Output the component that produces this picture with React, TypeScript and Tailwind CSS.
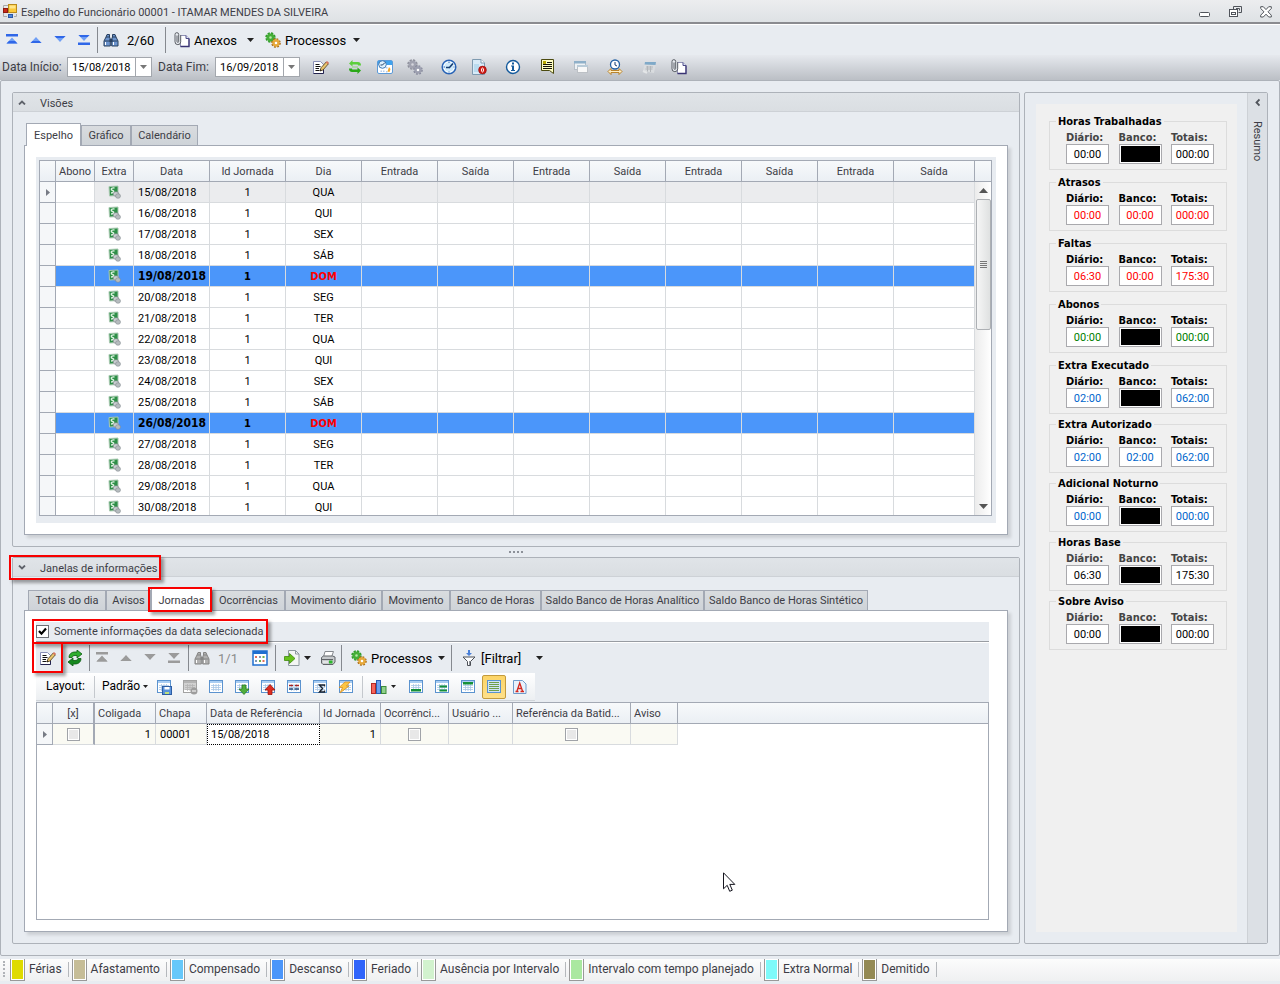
import { useState, type ReactNode } from "react";

const DAYS = [
  ["15/08/2018", "QUA"],
  ["16/08/2018", "QUI"],
  ["17/08/2018", "SEX"],
  ["18/08/2018", "SÁB"],
  ["19/08/2018", "DOM"],
  ["20/08/2018", "SEG"],
  ["21/08/2018", "TER"],
  ["22/08/2018", "QUA"],
  ["23/08/2018", "QUI"],
  ["24/08/2018", "SEX"],
  ["25/08/2018", "SÁB"],
  ["26/08/2018", "DOM"],
  ["27/08/2018", "SEG"],
  ["28/08/2018", "TER"],
  ["29/08/2018", "QUA"],
  ["30/08/2018", "QUI"],
];

const PUNCHES = ["Entrada", "Saída", "Entrada", "Saída", "Entrada", "Saída", "Entrada", "Saída"];

const INFO_TABS = [
  { label: "Totais do dia", w: "w-[78px]" },
  { label: "Avisos", w: "w-[45px]" },
  { label: "Jornadas", w: "w-[61px]" },
  { label: "Ocorrências", w: "w-[73px]" },
  { label: "Movimento diário", w: "w-[97px]" },
  { label: "Movimento", w: "w-[68px]" },
  { label: "Banco de Horas", w: "w-[91px]" },
  { label: "Saldo Banco de Horas Analítico", w: "w-[163px]" },
  { label: "Saldo Banco de Horas Sintético", w: "w-[164px]" },
];

type Total = { title: string; values: (string | null)[]; color: string; soft?: boolean };

const TOTALS_TOP: Total[] = [
  { title: "Horas Trabalhadas", values: ["00:00", null, "000:00"], color: "text-black", soft: true },
  { title: "Atrasos", values: ["00:00", "00:00", "000:00"], color: "text-[#ff0000]" },
  { title: "Faltas", values: ["06:30", "00:00", "175:30"], color: "text-[#ff0000]" },
  { title: "Abonos", values: ["00:00", null, "000:00"], color: "text-[#008000]" },
  { title: "Extra Executado", values: ["02:00", null, "062:00"], color: "text-[#0066cc]" },
];

const TOTALS_BOTTOM: Total[] = [
  { title: "Extra Autorizado", values: ["02:00", "02:00", "062:00"], color: "text-[#0066cc]" },
  { title: "Adicional Noturno", values: ["00:00", null, "000:00"], color: "text-[#0066cc]" },
  { title: "Horas Base", values: ["06:30", null, "175:30"], color: "text-black", soft: true },
  { title: "Sobre Aviso", values: ["00:00", null, "000:00"], color: "text-black", soft: true },
];

const LEGEND = [
  { label: "Férias", color: "bg-[#dfdb00]" },
  { label: "Afastamento", color: "bg-[#c6bd97]" },
  { label: "Compensado", color: "bg-[#66c8fa]" },
  { label: "Descanso", color: "bg-[#4b96fa]" },
  { label: "Feriado", color: "bg-[#3064fa]" },
  { label: "Ausência por Intervalo", color: "bg-[#d2f2ce]" },
  { label: "Intervalo com tempo planejado", color: "bg-[#aae8a0]" },
  { label: "Extra Normal", color: "bg-[#7dfafa]" },
  { label: "Demitido", color: "bg-[#948a54]" },
];

/* ---------- icons ---------- */

function Icon({ children }: { children: ReactNode }) {
  return (
    <svg width="16" height="16" viewBox="0 0 16 16" fill="none" className="shrink-0" aria-hidden="true">
      {children}
    </svg>
  );
}

const AppIcon = () => (
  <Icon>
    <rect x="6.500" y="1.500" width="8" height="8" fill="#fbc93a" stroke="#b98a1c" />
    <rect x="7.500" y="2.500" width="6" height="3" fill="#ffe68a" />
    <path d="M1.500 13.500V2.500H6" stroke="#aaa" />
    <rect x="1.500" y="5.500" width="4" height="4" fill="#c8291a" stroke="#8e1a10" />
    <rect x="6.500" y="11.500" width="4" height="3" fill="#4d86dc" stroke="#2c58a5" />
    <path d="M1.500 13.500H5M12 13.500h2.500V11" stroke="#aaa" />
  </Icon>
);

function NavIcon({ kind, gray }: { kind: "first" | "prev" | "next" | "last"; gray?: boolean }) {
  const c = gray ? "#9b9b9b" : "#2f67e8";
  const light = gray ? "#9b9b9b" : "#6f9ff5";
  return (
    <Icon>
      {kind === "first" && <><path d="M2 2h12v2.500H2z" fill={c} /><path d="M8 5.500l5.500 6h-11z" fill={light} /><path d="M5 9h6l2.500 2.500h-11z" fill={c} /></>}
      {kind === "prev" && <><path d="M8 5l5.500 6h-11z" fill={light} /><path d="M4.500 9h7l2 2h-11z" fill={c} /></>}
      {kind === "next" && <><path d="M8 10L2.500 4h11z" fill={light} /><path d="M4.500 6h7l2-2h-11z" fill={c} /></>}
      {kind === "last" && <><path d="M8 9L2.500 3h11z" fill={light} /><path d="M4.500 5h7l2-2h-11z" fill={c} /><path d="M2 10.500h12V13H2z" fill={c} /></>}
    </Icon>
  );
}

function BinocularsIcon({ gray }: { gray?: boolean }) {
  const d = gray ? "#858585" : "#29405f";
  const m = gray ? "#b0b0b0" : "#6b93cd";
  return (
    <Icon>
      <path d="M4 2.500h2.500v2.500l.8 2V14H1V9l2-4z" fill={m} stroke={d} />
      <path d="M12 2.500H9.500v2.500l-.8 2V14H15V9l-2-4z" fill={m} stroke={d} />
      <path d="M6.500 7h3v3h-3z" fill={d} />
      <path d="M2.500 10v3M10.500 10v3" stroke="#fff" />
      <path d="M3 5h3.500M9.500 5H13M1.500 9h5.500M9 9h5.500" stroke={d} />
    </Icon>
  );
}

const ClipIcon = () => (
  <Icon>
    <path d="M6.500 3.500h5.500l3 3v8H6.500z" fill="#fff" stroke="#8f90b5" />
    <path d="M15 6.500v8H6.500" stroke="#3a3474" strokeWidth="1.300" />
    <path d="M12 3.500v3h3" fill="#dfe3f5" stroke="#4b4a86" />
    <path d="M3 3.500v6a.8.8 0 0 0 1.700 0v-7A1.800 1.800 0 0 0 1 2.500v7.300a2.800 2.800 0 0 0 5.700 0V3" fill="#e8ecf1" stroke="#5b5f66" />
  </Icon>
);

function GearsIcon({ gray }: { gray?: boolean }) {
  return (
    <Icon>
      <circle cx="5.500" cy="5.500" r="4" stroke={gray ? "#8d8f9a" : "#2f9a2b"} strokeWidth="2.500" strokeDasharray="2 1.140" />
      <circle cx="5.500" cy="5.500" r="2.700" fill={gray ? "#d5d6dc" : "#b9e8a8"} stroke={gray ? "#a1a3b0" : "#45ae38"} strokeWidth="2.800" />
      <circle cx="11" cy="11" r="3.700" stroke={gray ? "#85889b" : "#a86a14"} strokeWidth="2.200" strokeDasharray="1.700 1.205" />
      <circle cx="11" cy="11" r="2.500" fill="#fff" stroke={gray ? "#9da0b0" : "#e6a83a"} strokeWidth="2.400" />
    </Icon>
  );
}

const EditIcon = () => (
  <Icon>
    <path d="M.5 2.500h7l3 3v9H.5z" fill="#fff" stroke="#8a90b8" />
    <path d="M.5 14.500h10V7" stroke="#23234e" />
    <path d="M2.500 5.500h4M2.500 7.500h5M2.500 9.500h3.500M2.500 11.500h4" stroke="#111" />
    <path d="M7 12l1-3.200L13.200 3l2.200 1.800L10 11z" fill="#e9c56e" stroke="#4e3a1c" strokeWidth=".8" />
    <path d="M12.700 3.500L14 2l2 1.700-1.200 1.500z" fill="#d9775f" />
    <path d="M7 12l.5-1.700 1.200 1z" fill="#111" />
  </Icon>
);

function RefreshIcon({ dark }: { dark?: boolean }) {
  return dark ? (
    <Icon>
      <path d="M2 7.500C2 4 4.500 2 8 2h2V0l5 4-5 4V5.500H8c-1.500 0-2.500.7-3 2z" fill="#2fae2f" stroke="#0a5c12" strokeWidth=".8" />
      <path d="M14 8.500c0 3.500-2.500 5.500-6 5.500H6v2l-5-4 5-4v2.500h2c1.500 0 2.500-.7 3-2z" fill="#16891f" stroke="#0a5c12" strokeWidth=".8" />
    </Icon>
  ) : (
    <Icon>
      <path d="M2 4.500L5.500 1v2H11c2 0 3 1.500 3 3.500h-3c0-.7-.3-1-1-1H5.500v2z" fill="#5ccf3c" />
      <path d="M14 11.500L10.500 15v-2H5c-2 0-3-1.500-3-3.500h3c0 .7.3 1 1 1h4.500v-2z" fill="#2aa818" />
      <path d="M5 7.500h6v1H5z" fill="#8edb75" />
    </Icon>
  );
}

const CalendarClockIcon = () => (
  <Icon>
    <rect x=".5" y="1.500" width="15" height="13" rx="1.500" fill="#fff" stroke="#5c9bd9" />
    <path d="M1 2h14v4H1z" fill="#3fa3ee" />
    <path d="M9 8h1.500v1.500H9zM9 12h1.500v1.500H9zM3.500 11.500H5V13H3.500zM6 11.500h1.500V13H6z" fill="#b5cbe8" />
    <path d="M12 8l1.500 2-1 3-2-.5z" fill="#f5a623" />
    <circle cx="5.500" cy="5.500" r="3.800" fill="#dff1fd" stroke="#4179b4" />
    <path d="M5.500 6L8 3.500M5.500 6H3.500" stroke="#1d3f66" />
  </Icon>
);

const ClockIcon = () => (
  <Icon>
    <circle cx="8" cy="8" r="6.800" fill="#cfeafb" stroke="#2a64b6" strokeWidth="1.500" />
    <circle cx="8" cy="8" r="5.200" stroke="#fff" />
    <path d="M8 9l4-4.500M8.500 8.500H5" stroke="#143c72" strokeWidth="1.600" />
    <path d="M8 2.500v1.500M8 12.500v1M2.500 8H4M12.500 8h1" stroke="#2a64b6" />
  </Icon>
);

const DocErrorIcon = () => (
  <Icon>
    <path d="M1.500.5h8.500l3.500 3.500v11.500h-12z" fill="#d8ebf8" stroke="#7e9ab0" />
    <path d="M10 .5v3.500h3.500" fill="#fff" stroke="#7e9ab0" />
    <path d="M3 5h5v8H3z" fill="#b9dbef" />
    <circle cx="11.500" cy="11" r="3.900" fill="#d11a14" stroke="#8e0e0b" strokeWidth=".6" />
    <ellipse cx="11.500" cy="11" rx="1" ry="2" stroke="#fff" />
  </Icon>
);

const InfoIcon = () => (
  <Icon>
    <circle cx="8" cy="8" r="6.500" fill="#fff" stroke="#145a9c" strokeWidth="1.400" />
    <path d="M7 3.500h2v2H7zM6 6.500h3V11h1v1H6v-1h1V7.500H6z" fill="#145a9c" />
  </Icon>
);

const NoteIcon = () => (
  <Icon>
    <path d="M2.500.5h12v14l-4-3h-8z" fill="#fffec4" stroke="#4b4a10" />
    <path d="M4 2h3v3H4z" fill="#b7a600" />
    <path d="M8 3.500h5M4 5.500h9M4 7.500h9M4 9.500h9" stroke="#16160a" />
  </Icon>
);

const WindowsIcon = () => (
  <Icon>
    <rect x="1.500" y="2.500" width="11" height="8" fill="#eef2f5" stroke="#b5bec7" />
    <path d="M1 2h12v2.500H1z" fill="#8fb0c9" />
    <rect x="4.500" y="6.500" width="10" height="7" fill="#f8f8f8" stroke="#bcc0c5" />
    <path d="M4 6h11v2H4z" fill="#b9cbd8" />
  </Icon>
);

const ClockArrowsIcon = () => (
  <Icon>
    <circle cx="8" cy="5.500" r="4.500" fill="#fff" stroke="#2361a4" strokeWidth="1.300" />
    <path d="M8 3v3l2 1" stroke="#173d70" />
    <path d="M1 12.500l3-3v2h8v-2l3 3-3 3v-2H4v2z" fill="#fff0c8" stroke="#b57a1b" strokeWidth=".9" />
  </Icon>
);

const SheetIcon = () => (
  <Icon>
    <path d="M4 3h11l-2 11-11-2z" fill="#d9dcdf" />
    <path d="M4 3h11l-.5 3-11-.5z" fill="#7fa9c8" />
    <path d="M5 8h7M4.500 10h7M6.500 7v5.500M9.500 7v6" stroke="#b2b6ba" />
    <path d="M2 12l4 1.800" stroke="#e4e6e8" strokeWidth="2" />
  </Icon>
);

const MoneyIcon = () => (
  <svg width="14" height="14" viewBox="0 0 14 14" className="mx-auto" aria-hidden="true">
    <path d="M2 1.500L11 1v9.500l-8.500.5z" fill="#2e8f47" stroke="#a9c9b1" />
    <path d="M7.500 3C3 2.500 4 5 5.500 5.500S8 8 4 8" fill="none" stroke="#dcf3e0" strokeWidth="1.400" />
    <ellipse cx="9" cy="9" rx="2.800" ry="2.300" fill="#c9ced0" stroke="#7d8589" strokeWidth=".6" />
    <ellipse cx="11" cy="11" rx="2.500" ry="2.300" fill="#b6bcbf" stroke="#858c90" strokeWidth=".6" />
  </svg>
);

const DotsGridIcon = () => (
  <Icon>
    <rect x="1" y="1" width="14" height="14" fill="#fff" stroke="#1f6fd0" strokeWidth="1.500" />
    <path d="M1 1h14v3H1z" fill="#1f6fd0" />
    <path d="M3 6h2v2H3zM10.500 10h2v2h-2z" fill="#e26d5a" />
    <path d="M7 6h2v2H7zM3 10h2v2H3z" fill="#7d97b6" />
    <path d="M10.500 6h2v2h-2zM7 10h2v2H7z" fill="#6ab04c" />
  </Icon>
);

const ExportIcon = () => (
  <Icon>
    <path d="M4.500.5h7l3.500 3.500v11.500H4.500z" fill="#f4f6f4" stroke="#8f9aa0" />
    <path d="M11.500.5V4H15" stroke="#8f9aa0" />
    <path d="M.5 6.500h5v-3l5.500 5-5.500 5v-3h-5z" fill="#67c21c" stroke="#3f8a0b" strokeWidth=".8" />
  </Icon>
);

const PrintIcon = () => (
  <Icon>
    <path d="M5 1.500h8.500L11.500 7h-8z" fill="#fff" stroke="#85898e" />
    <path d="M1.500 7.500l2-1.500h9l2.500 1v5l-2 2.500h-10l-1.500-1.500z" fill="#c7cacd" stroke="#606468" />
    <path d="M2 9.500h11" stroke="#606468" />
    <path d="M9 10.500h3.500v3H9z" fill="#2db92d" />
    <path d="M3 12h5" stroke="#fff" />
  </Icon>
);

const FilterIcon = () => (
  <Icon>
    <path d="M7 0h2v3h2L8 6 5 3h2z" fill="#4a80d8" />
    <path d="M2 7h12l-4.500 4.500v4h-3v-4z" fill="#fff" stroke="#4c5057" />
    <path d="M8 11h1v4H8z" fill="#90959c" />
  </Icon>
);

function TableIcon({ children, gray }: { children?: ReactNode; gray?: boolean }) {
  return (
    <Icon>
      <rect x="1.500" y="1.500" width="13" height="12" fill="#fff" stroke={gray ? "#a2a2a2" : "#5b93cf"} />
      <path d="M2 2h12v2H2z" fill={gray ? "#b7b7b7" : "#a9cdf2"} />
      <path d="M3 6.500h10M3 8.500h10M3 10.500h10M5.500 5v7M8 5v7M10.500 5v7" stroke={gray ? "#b7b7b7" : "#a8c6e6"} strokeWidth=".8" />
      {children}
    </Icon>
  );
}

const ChartIcon = () => (
  <Icon>
    <rect x=".5" y="4.500" width="4" height="10" fill="#f4635b" stroke="#b52a25" />
    <rect x="5.500" y="1.500" width="4" height="13" fill="#6ba0ef" stroke="#2a5eb5" />
    <rect x="10.500" y="7.500" width="4.500" height="7" fill="#8fd18a" stroke="#3d8a3a" />
  </Icon>
);

const Caret = () => (
  <svg width="7" height="4" viewBox="0 0 7 4" className="shrink-0" aria-hidden="true">
    <path d="M0 0h7L3.500 4z" fill="#222" />
  </svg>
);

const SmallCaret = () => (
  <svg width="5" height="3" viewBox="0 0 5 3" className="shrink-0" aria-hidden="true">
    <path d="M0 0h5L2.500 3z" fill="#222" />
  </svg>
);

const RowMarker = () => (
  <svg width="4" height="7" viewBox="0 0 4 7" className="mx-auto" aria-hidden="true">
    <path d="M0 0l4 3.500L0 7z" fill="#777b85" />
  </svg>
);

/* ---------- small pieces ---------- */

function ToolButton({ label, w = "w-6", children }: { label: string; w?: string; children: ReactNode }) {
  return (
    <button type="button" aria-label={label} className={`flex h-6 shrink-0 items-center justify-center ${w}`}>
      {children}
    </button>
  );
}

const Sep = () => <span className="h-[26px] w-px shrink-0 bg-[#85898f]" />;
const LightSep = () => <span className="h-[22px] w-px shrink-0 bg-[#c4c8cd]" />;

// red marker drawn around the steps of the tutorial
const Marker = ({ className }: { className: string }) => (
  <span className={`pointer-events-none absolute z-10 border-2 border-[#f80000] shadow-[3px_3px_3px_rgba(0,0,0,0.35)] ${className}`} />
);

function NavButtons({ gray }: { gray?: boolean }) {
  return (
    <>
      <ToolButton label="Primeiro"><NavIcon kind="first" gray={gray} /></ToolButton>
      <ToolButton label="Anterior"><NavIcon kind="prev" gray={gray} /></ToolButton>
      <ToolButton label="Próximo"><NavIcon kind="next" gray={gray} /></ToolButton>
      <ToolButton label="Último"><NavIcon kind="last" gray={gray} /></ToolButton>
    </>
  );
}

function DateField({ id, label, value, w }: { id: string; label: string; value: string; w: string }) {
  return (
    <>
      <label htmlFor={id} className={`text-[12px] whitespace-nowrap ${w}`}>{label}</label>
      <div className="mx-1.5 flex h-5 w-[85px] border border-[#a3a7ad] bg-white">
        <input id={id} defaultValue={value} className="w-[67px] min-w-0 pl-1 text-black outline-none" />
        <button type="button" aria-label={`Abrir ${label}`} className="flex flex-1 items-center justify-center border-l border-[#a3a7ad]">
          <svg width="7" height="4" viewBox="0 0 7 4"><path d="M0 0h7L3.500 4z" fill="#777" /></svg>
        </button>
      </div>
    </>
  );
}

function Tab({ label, active, w, onClick, children }: { label: string; active: boolean; w: string; onClick: () => void; children?: ReactNode }) {
  return (
    <button
      type="button"
      role="tab"
      aria-selected={active}
      onClick={onClick}
      className={`relative shrink-0 border border-b-0 border-[#a3a9b4] whitespace-nowrap ${w} ${
        active ? "z-[1] -mb-px h-[23px] bg-white" : "h-5 bg-linear-to-b from-[#d9dcdf] to-[#ced3d8]"
      }`}
    >
      {label}
      {children}
    </button>
  );
}

function PanelHeader({ title, open, marked }: { title: string; open?: boolean; marked?: boolean }) {
  return (
    <div className="relative flex h-[19px] shrink-0 items-center border-b border-[#cdd1d6] bg-linear-to-b from-[#e0e4e8] to-[#dadee2] pl-[5px]">
      <svg width="8" height="5" viewBox="0 0 8 5" fill="none" aria-hidden="true">
        <path d={open ? "M1 4.500l3-3 3 3" : "M1 .5l3 3 3-3"} stroke="#5f636b" strokeWidth="1.800" />
      </svg>
      <h2 className="ml-3.5 pt-0.5">{title}</h2>
      {marked && <Marker className="-top-[3px] -left-1 h-[25px] w-[152px]" />}
    </div>
  );
}

function TotalBox({ total }: { total: Total }) {
  return (
    <fieldset className="min-w-0 border border-[#dcdcdc] px-4 pb-[5px]">
      <legend className="-ml-2.5 px-0.5 font-['DejaVu_Sans_Condensed',sans-serif] font-bold leading-[13px] text-black">{total.title}</legend>
      <div className="-mr-1 flex justify-between pt-[3px]">
        {["Diário:", "Banco:", "Totais:"].map((name, i) => (
          <label key={name} className="w-[43px] whitespace-nowrap">
            <span className={`block font-['DejaVu_Sans_Condensed',sans-serif] font-bold leading-[13px] ${total.soft ? "text-[#444]" : "text-black"}`}>{name}</span>
            <input
              readOnly
              value={total.values[i] ?? ""}
              className={`block h-5 w-full border border-[#a9a9ad] text-center outline-none ${total.color} ${
                total.values[i] === null ? "bg-black shadow-[inset_0_0_0_1px_#fff]" : "bg-white"
              }`}
            />
          </label>
        ))}
      </div>
    </fieldset>
  );
}

/* ---------- sections ---------- */

function DaysGrid() {
  return (
    <div className="bg-[#e8ecf1] pt-[3px] pr-1 pb-[7px] pl-[3px]">
      <div className="flex h-[356px] overflow-hidden border border-[#a3a9b4] bg-white">
        <table className="h-fit min-w-0 flex-1 table-fixed border-separate border-spacing-0 text-center">
          <colgroup>
            <col className="w-4" />
            <col className="w-[39px]" />
            <col className="w-[39px]" />
            <col className="w-[76px]" />
            <col className="w-[76px]" />
            <col className="w-[76px]" />
            {PUNCHES.map((_, i) => (
              <col key={i} className={i < 7 ? "w-[76px]" : ""} />
            ))}
          </colgroup>
          <thead>
            <tr className="h-[21px]">
              {["", "Abono", "Extra", "Data", "Id Jornada", "Dia", ...PUNCHES].map((h, i) => (
                <th key={i} className="border-r border-b border-[#a3a9b4] bg-linear-to-b from-[#f7f9fb] to-[#ebeff4] p-0 font-normal whitespace-nowrap">
                  {h}
                </th>
              ))}
            </tr>
          </thead>
          <tbody className="text-black">
            {DAYS.map(([date, day], r) => {
              const rest = day === "DOM";
              const bg = rest
                ? "bg-[#4b96fa] font-['DejaVu_Sans_Condensed',sans-serif] font-bold"
                : r === 0
                  ? "bg-[#ebecee]"
                  : "bg-white";
              const cell = `border-r border-b border-[#d8dbde] p-0 ${bg}`;
              return (
                <tr key={date} className="h-[21px]">
                  <td className="border-r border-b border-[#a3a9b4] bg-[#f5f7f9] p-0">{r === 0 && <RowMarker />}</td>
                  <td className={`border-r border-b border-[#d8dbde] p-0 ${rest ? "bg-[#4b96fa]" : "bg-white"}`} />
                  <td className={cell}><MoneyIcon /></td>
                  <td className={`${cell} pl-1 text-left whitespace-nowrap ${rest ? "text-[12px]" : ""}`}>{date}</td>
                  <td className={cell}>1</td>
                  <td className={`${cell} ${rest ? "text-[#ff0000]" : ""}`}>{day}</td>
                  {PUNCHES.map((_, i) => (
                    <td key={i} className={cell} />
                  ))}
                </tr>
              );
            })}
          </tbody>
        </table>
        <div className="flex w-4 shrink-0 flex-col">
          <div className="h-[21px] border-b border-[#a3a9b4] bg-linear-to-b from-[#f7f9fb] to-[#ebeff4]" />
          <div className="flex flex-1 flex-col items-center bg-linear-to-r from-[#ececec] to-white">
            <button type="button" aria-label="Rolar para cima" className="flex h-[17px] w-full items-center justify-center">
              <svg width="9" height="5" viewBox="0 0 9 5"><path d="M4.500 0L9 5H0z" fill="#555" /></svg>
            </button>
            <div className="flex h-[131px] w-[15px] flex-col items-center justify-center gap-px rounded-xs border border-[#adb0b4] bg-linear-to-r from-[#f6f6f6] to-[#dfe1e1]">
              <span className="h-px w-[7px] bg-[#777]" />
              <span className="h-px w-[7px] bg-[#777]" />
              <span className="h-px w-[7px] bg-[#777]" />
              <span className="h-px w-[7px] bg-[#777]" />
            </div>
            <button type="button" aria-label="Rolar para baixo" className="mt-auto flex h-[17px] w-full items-center justify-center">
              <svg width="9" height="5" viewBox="0 0 9 5"><path d="M4.500 5L0 0h9z" fill="#555" /></svg>
            </button>
          </div>
        </div>
      </div>
    </div>
  );
}

function JourneyToolbar() {
  return (
    <div className="flex h-[30px] items-center text-[13px] text-black">
      <div className="relative mr-0.5">
        <ToolButton label="Editar"><EditIcon /></ToolButton>
        <Marker className="-top-1 -left-1 h-[31px] w-[31px]" />
      </div>
      <ToolButton label="Atualizar" w="w-[26px]"><RefreshIcon dark /></ToolButton>
      <span className="w-px" />
      <Sep />
      <NavButtons gray />
      <span className="w-0.5" />
      <Sep />
      <span className="w-px" />
      <ToolButton label="Localizar"><BinocularsIcon gray /></ToolButton>
      <span className="w-[33px] pl-1 text-[#8b8b8b]">1/1</span>
      <ToolButton label="Grade" w="w-[26px]"><DotsGridIcon /></ToolButton>
      <span className="w-0.5" />
      <Sep />
      <button type="button" aria-label="Exportar" className="ml-2 flex w-8 items-center gap-1"><ExportIcon /><Caret /></button>
      <ToolButton label="Imprimir"><PrintIcon /></ToolButton>
      <span className="w-px" />
      <Sep />
      <button type="button" className="ml-[9px] flex w-[100px] items-center gap-1 whitespace-nowrap">
        <GearsIcon />Processos<span className="ml-auto pr-1.5"><Caret /></span>
      </button>
      <Sep />
      <button type="button" className="ml-[9px] flex w-[82px] items-center gap-1 whitespace-nowrap">
        <FilterIcon />[Filtrar]<span className="ml-auto"><Caret /></span>
      </button>
    </div>
  );
}

function LayoutToolbar() {
  const b = "w-[26px]";
  return (
    <div className="mb-px flex h-7 w-fit items-center border-b border-[#cfd4d9] bg-linear-to-b from-white to-[#eceff2] pr-0.5 text-[12px] text-black">
      <span className="w-[58px] pl-2.5">Layout:</span>
      <LightSep />
      <button type="button" className="flex w-14 items-center justify-between pr-[3px] pl-[7px]">Padrão<SmallCaret /></button>
      <ToolButton label="Salvar layout" w={b}>
        <TableIcon><rect x="6.500" y="7.500" width="9" height="8" fill="#5b93dc" stroke="#2d5da3" /><path d="M8.500 8h5v2.500h-5z" fill="#fff" /><path d="M9 13h4v2H9z" fill="#bfe07a" /></TableIcon>
      </ToolButton>
      <ToolButton label="Excluir layout" w={b}>
        <TableIcon gray><path d="M2 2h12v9H2z" fill="#b2b2b2" fillOpacity=".6" /><circle cx="12" cy="12" r="3.500" fill="#9d9d9d" /><path d="M10 12h4" stroke="#fff" /></TableIcon>
      </ToolButton>
      <ToolButton label="Tabela" w={b}><TableIcon /></ToolButton>
      <ToolButton label="Importar layout" w={b}>
        <TableIcon><path d="M8 6h4v4h3l-5 5.500L5 10h3z" fill="#4fae3c" stroke="#2a7a1e" strokeWidth=".8" /></TableIcon>
      </ToolButton>
      <ToolButton label="Exportar layout" w={b}>
        <TableIcon><path d="M8 15.500h4V11h3l-5-5.500L5 11h3z" fill="#e02b1f" stroke="#9c150d" strokeWidth=".8" /></TableIcon>
      </ToolButton>
      <ToolButton label="Agrupar" w={b}>
        <TableIcon><path d="M3 6.500h4M9 6.500h4" stroke="#a52222" strokeWidth="1.400" /><path d="M3 10h4M8.500 10H13" stroke="#274b78" strokeWidth="1.400" /></TableIcon>
      </ToolButton>
      <ToolButton label="Somar" w={b}>
        <TableIcon><path d="M12.500 7.500v-1.500h-5l3 3.500-3 3.500h5v-1.500" fill="none" stroke="#1b2430" strokeWidth="1.400" /></TableIcon>
      </ToolButton>
      <ToolButton label="Automático" w={b}>
        <TableIcon><path d="M7 3h5L8.500 7H11l-9 7 2.500-5.500H1z" fill="#fcc543" stroke="#d48a1a" strokeWidth=".7" /></TableIcon>
      </ToolButton>
      <span className="w-[3px]" />
      <LightSep />
      <button type="button" aria-label="Gráfico" className="ml-2 flex w-8 items-center gap-1"><ChartIcon /><SmallCaret /></button>
      <ToolButton label="Rodapé" w={b}><TableIcon><path d="M3 10h10v2.500H3z" fill="#14903a" /></TableIcon></ToolButton>
      <ToolButton label="Rodapé de grupo" w={b}><TableIcon><path d="M5.500 6.500H13v2H5.500zM5.500 10.500H13v2H5.500z" fill="#14903a" /></TableIcon></ToolButton>
      <ToolButton label="Linha de filtro" w={b}><TableIcon><path d="M3 3h10v2.500H3z" fill="#14903a" /></TableIcon></ToolButton>
      <button type="button" aria-label="Linhas alternadas" className="mx-px flex size-6 items-center justify-center rounded-xs border border-[#c39a3c] bg-linear-to-b from-[#fcd466] to-[#fee08a]">
        <TableIcon><path d="M2 2h12v11H2z" fill="#cfe3f8" /><path d="M3 3.500h10M3 5.500h10M3 7.500h10M3 9.500h10M3 11.500h10" stroke="#6f9f4c" /></TableIcon>
      </button>
      <ToolButton label="Fonte" w={b}>
        <Icon>
          <path d="M1.500 1.500h9l3.500 3.500v9.500H1.500z" fill="#e8f2fc" stroke="#6f9ccc" />
          <path d="M3.500 12.500h3M8.500 12.500h3.500M5 12l2.700-8 2.800 8M6 9.500h4" stroke="#d5281e" strokeWidth="1.300" />
        </Icon>
      </ToolButton>
    </div>
  );
}

function JourneyGrid() {
  const th = "border-r border-b border-[#a3a9b4] bg-linear-to-b from-[#f7f9fb] to-[#ebeff4] p-0 font-normal";
  const td = "border-r border-b border-[#d8dbde] bg-[#fafaf3] px-1 py-0";
  const check = "mx-auto block size-[13px] appearance-none border border-[#a0a3a8] bg-[#e8e8e8] shadow-[inset_0_0_0_1px_#fff]";
  return (
    <div className="relative flex-1 border border-[#a3a9b4] bg-white">
      <table className="w-full table-fixed border-separate border-spacing-0 text-left">
        <colgroup>
          <col className="w-4" />
          <col className="w-[42px]" />
          <col className="w-[61px]" />
          <col className="w-[51px]" />
          <col className="w-[113px]" />
          <col className="w-[61px]" />
          <col className="w-[68px]" />
          <col className="w-16" />
          <col className="w-[118px]" />
          <col className="w-[47px]" />
          <col />
        </colgroup>
        <thead>
          <tr className="h-[21px]">
            <th className={th} />
            <th className={`${th} border-r-2 text-center`}>[x]</th>
            {["Coligada", "Chapa", "Data de Referência", "Id Jornada", "Ocorrênci...", "Usuário ...", "Referência da Batid...", "Aviso"].map((h) => (
              <th key={h} className={`${th} overflow-hidden pl-[3px] whitespace-nowrap`}>{h}</th>
            ))}
            <th className={`${th} border-r-0`} />
          </tr>
        </thead>
        <tbody className="text-black">
          <tr className="h-[21px]">
            <td className="border-r border-b border-[#a3a9b4] bg-[#f5f7f9] p-0"><RowMarker /></td>
            <td className={`${td} border-r-2 border-r-[#a3a9b4]`}><input type="checkbox" aria-label="Selecionar" className={check} /></td>
            <td className={`${td} text-right`}>1</td>
            <td className={td}>00001</td>
            <td className="border border-dotted border-black bg-white px-[3px] py-0">15/08/2018</td>
            <td className={`${td} text-right`}>1</td>
            <td className={td}><input type="checkbox" aria-label="Ocorrência" className={check} /></td>
            <td className={td} />
            <td className={td}><input type="checkbox" aria-label="Referência da Batida" className={check} /></td>
            <td className={td} />
            <td />
          </tr>
        </tbody>
      </table>
      <svg width="13" height="21" viewBox="0 0 13 21" className="absolute top-[169px] left-[686px]" aria-hidden="true">
        <path d="M.5.8v16l3.700-3.500 2.500 6 2.600-1.100-2.500-5.800h5z" fill="#fff" stroke="#15151f" />
      </svg>
    </div>
  );
}

export default function App() {
  const [view, setView] = useState("Espelho");
  const [info, setInfo] = useState("Jornadas");
  const [onlySelected, setOnlySelected] = useState(true);

  return (
    <div className="flex min-h-screen flex-col bg-[#e8ecf1] font-[Roboto,'Liberation_Sans',sans-serif] text-[11px] leading-[15px] text-[#3d3d46]">
      <header className="flex h-6 items-center border-b-2 border-[#8a8b90] bg-linear-to-b from-[#ecedef] to-[#dee2e5] px-0.5">
        <AppIcon />
        <h1 className="ml-[3px] pt-0.5">Espelho do Funcionário 00001 - ITAMAR MENDES DA SILVEIRA</h1>
        <div className="ml-auto flex gap-[18px] pt-0.5 pr-1.5">
          <button type="button" aria-label="Minimizar">
            <svg width="12" height="12" viewBox="0 0 12 12" fill="none"><rect x=".5" y="6.500" width="10" height="4" rx="1" stroke="#50545b" fill="#fff" /></svg>
          </button>
          <button type="button" aria-label="Restaurar">
            <svg width="13" height="12" viewBox="0 0 13 12" fill="none">
              <path d="M4.500 3.500v-3h8v6h-3M7 2.500h3.500v2" stroke="#50545b" />
              <rect x=".5" y="3.500" width="8" height="7" stroke="#50545b" fill="#fff" />
              <rect x="2.500" y="6.500" width="4" height="2" stroke="#50545b" />
            </svg>
          </button>
          <button type="button" aria-label="Fechar">
            <svg width="12" height="12" viewBox="0 0 12 12" fill="none">
              <path d="M.7.700h2.600L6 3.600 8.700.7h2.600v1.800L8 5.800l3.300 3.400V11H8.700L6 8.200 3.300 11H.7V9.200L4 5.800.7 2.500z" fill="#fff" stroke="#50545b" />
            </svg>
          </button>
        </div>
      </header>

      <div className="flex h-[31px] items-center border-t border-white text-[13px] text-black">
        <NavButtons />
        <span className="w-px" />
        <Sep />
        <button type="button" className="flex w-[67px] items-center gap-2 pl-[5px] whitespace-nowrap"><BinocularsIcon />2/60</button>
        <Sep />
        <button type="button" className="ml-2 flex w-20 items-center gap-1 whitespace-nowrap">
          <ClipIcon />Anexos<span className="ml-auto"><Caret /></span>
        </button>
        <button type="button" className="ml-[11px] flex w-[95px] items-center gap-1 whitespace-nowrap">
          <GearsIcon />Processos<span className="ml-auto"><Caret /></span>
        </button>
      </div>

      <div className="flex h-[25px] items-center bg-linear-to-b from-[#e6e9ee] to-[#bbbfc5] pb-px pl-0.5">
        <DateField id="inicio" label="Data Início:" value="15/08/2018" w="w-[59px]" />
        <DateField id="fim" label="Data Fim:" value="16/09/2018" w="w-[51px]" />
        <div className="flex gap-1">
          <ToolButton label="Editar" w="w-[30px]"><EditIcon /></ToolButton>
          <div className="flex">
            <ToolButton label="Atualizar" w="w-[30px]"><RefreshIcon /></ToolButton>
            <ToolButton label="Calendário" w="w-[30px]"><CalendarClockIcon /></ToolButton>
            <ToolButton label="Recalcular" w="w-[30px]"><GearsIcon gray /></ToolButton>
          </div>
          <div className="flex">
            <ToolButton label="Horário" w="w-[30px]"><ClockIcon /></ToolButton>
            <ToolButton label="Erros" w="w-[30px]"><DocErrorIcon /></ToolButton>
          </div>
          <ToolButton label="Informações" w="w-[30px]"><InfoIcon /></ToolButton>
          <ToolButton label="Notas" w="w-[30px]"><NoteIcon /></ToolButton>
          <ToolButton label="Janelas" w="w-[30px]"><WindowsIcon /></ToolButton>
          <ToolButton label="Intervalo" w="w-[30px]"><ClockArrowsIcon /></ToolButton>
          <div className="flex">
            <ToolButton label="Planilha" w="w-[30px]"><SheetIcon /></ToolButton>
            <ToolButton label="Anexos" w="w-[30px]"><ClipIcon /></ToolButton>
          </div>
        </div>
      </div>

      <main className="flex flex-1 gap-1 rounded-xs border border-[#adb2b9] p-[11px]">
        <div className="flex min-w-0 flex-1 flex-col">
          <section className="rounded-xs border border-[#adb2b9]">
            <PanelHeader title="Visões" open />
            <div className="p-[11px]">
              <div role="tablist" className="flex h-[22px] items-end pl-0.5">
                <Tab label="Espelho" w="w-[55px]" active={view === "Espelho"} onClick={() => setView("Espelho")} />
                <Tab label="Gráfico" w="w-[50px]" active={view === "Gráfico"} onClick={() => setView("Gráfico")} />
                <Tab label="Calendário" w="w-[67px]" active={view === "Calendário"} onClick={() => setView("Calendário")} />
              </div>
              <div className="border border-[#a3a9b4] bg-white p-[11px] shadow-[3px_3px_3px_rgba(0,0,0,0.12)]">
                <DaysGrid />
              </div>
            </div>
          </section>

          <div className="flex h-2.5 items-center justify-center gap-0.5">
            <span className="size-0.5 bg-[#8d9199]" />
            <span className="size-0.5 bg-[#8d9199]" />
            <span className="size-0.5 bg-[#8d9199]" />
            <span className="size-0.5 bg-[#8d9199]" />
          </div>

          <section className="flex flex-1 flex-col rounded-xs border border-[#adb2b9]">
            <PanelHeader title="Janelas de informações" marked />
            <div className="flex flex-1 flex-col p-[11px]">
              <div role="tablist" className="flex h-[22px] items-end pl-1">
                {INFO_TABS.map((t) => (
                  <Tab key={t.label} label={t.label} w={t.w} active={info === t.label} onClick={() => setInfo(t.label)}>
                    {t.label === "Jornadas" && <Marker className="-top-0.5 -right-px -bottom-px -left-1" />}
                  </Tab>
                ))}
              </div>
              <div className="flex flex-1 flex-col border border-[#a3a9b4] bg-white py-[11px] pr-[18px] pl-[11px] shadow-[3px_3px_3px_rgba(0,0,0,0.12)]">
                <div className="border-b border-[#989ca2] bg-[#e8ecf1]">
                  <label className="relative flex h-[19px] w-[230px] items-center gap-[5px] whitespace-nowrap">
                    <span className="relative size-[13px]">
                      <input
                        type="checkbox"
                        checked={onlySelected}
                        onChange={(e) => setOnlySelected(e.target.checked)}
                        className="block size-[13px] appearance-none border border-[#6d7076] bg-white"
                      />
                      {onlySelected && (
                        <svg width="13" height="13" viewBox="0 0 13 13" fill="none" className="pointer-events-none absolute inset-0">
                          <path d="M3 6l2.500 2.700L10 3.500" stroke="#000" strokeWidth="2.200" />
                        </svg>
                      )}
                    </span>
                    Somente informações da data selecionada
                    <Marker className="-top-[3px] -left-1 h-[25px] w-[236px]" />
                  </label>
                </div>
                <div className="border-t border-white bg-[#e8ecf1]">
                  <JourneyToolbar />
                  <LayoutToolbar />
                </div>
                <JourneyGrid />
              </div>
            </div>
          </section>
        </div>

        <aside className="flex w-[244px] shrink-0 rounded-xs border border-[#adb2b9]">
          <div className="m-[11px] mr-2.5 flex-1 bg-[#f0f0f0] pt-[11px] pr-[10px] pl-[13px]">
            <div className="flex flex-col gap-1.5">
              {TOTALS_TOP.map((t) => <TotalBox key={t.title} total={t} />)}
            </div>
            <div className="mt-1 flex flex-col gap-1">
              {TOTALS_BOTTOM.map((t) => <TotalBox key={t.title} total={t} />)}
            </div>
          </div>
          <div className="flex w-5 flex-col items-center border-l border-[#cdd1d6] bg-[#dce0e5] pt-[5px]">
            <svg width="5" height="9" viewBox="0 0 5 9" fill="none" aria-hidden="true">
              <path d="M4.500 1.500l-3 3 3 3" stroke="#50545b" strokeWidth="1.800" />
            </svg>
            <span className="mt-3.5 [writing-mode:vertical-rl]">Resumo</span>
          </div>
        </aside>
      </main>

      <footer className="mt-[3px] mb-[3px] flex h-[22px] items-start bg-linear-to-b from-[#fcfcfc] to-[#eff0f1] pl-[3px] text-[12px]">
        <span className="mt-0.5 mr-[5px] h-4 border-l-2 border-dotted border-[#b0b3b8]" />
        {LEGEND.map((item) => (
          <div key={item.label} className="mr-[3px] flex items-start whitespace-nowrap">
            <span className={`h-[22px] w-[15px] border border-t-0 border-[#999] shadow-[inset_0_0_0_1px_#fff] ${item.color}`} />
            <span className="mx-1 leading-5">{item.label}</span>
            <span className="mt-[3px] ml-0.5 h-[15px] w-px bg-[#b5b8bc]" />
          </div>
        ))}
      </footer>
    </div>
  );
}
